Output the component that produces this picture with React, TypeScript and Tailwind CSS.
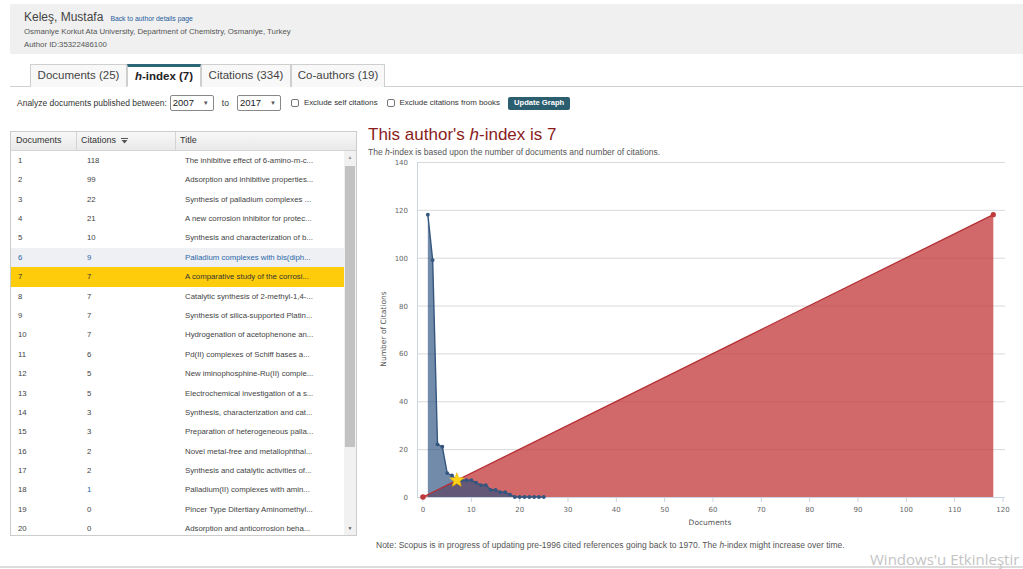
import React from 'react';

const ROWS: [number, number, string][] = [
  [1, 118, 'The inhibitive effect of 6-amino-m-c...'],
  [2, 99, 'Adsorption and inhibitive properties...'],
  [3, 22, 'Synthesis of palladium complexes ...'],
  [4, 21, 'A new corrosion inhibitor for protec...'],
  [5, 10, 'Synthesis and characterization of b...'],
  [6, 9, 'Palladium complexes with bis(diph...'],
  [7, 7, 'A comparative study of the corrosi...'],
  [8, 7, 'Catalytic synthesis of 2-methyl-1,4-...'],
  [9, 7, 'Synthesis of silica-supported Platin...'],
  [10, 7, 'Hydrogenation of acetophenone an...'],
  [11, 6, 'Pd(II) complexes of Schiff bases a...'],
  [12, 5, 'New iminophosphine-Ru(II) comple...'],
  [13, 5, 'Electrochemical investigation of a s...'],
  [14, 3, 'Synthesis, characterization and cat...'],
  [15, 3, 'Preparation of heterogeneous palla...'],
  [16, 2, 'Novel metal-free and metallophthal...'],
  [17, 2, 'Synthesis and catalytic activities of...'],
  [18, 1, 'Palladium(II) complexes with amin...'],
  [19, 0, 'Pincer Type Ditertiary Aminomethyl...'],
  [20, 0, 'Adsorption and anticorrosion beha...'],
];

const CITES = [118, 99, 22, 21, 10, 9, 7, 7, 7, 7, 6, 5, 5, 3, 3, 2, 2, 1, 0, 0, 0, 0, 0, 0, 0];

// chart geometry (svg coords)
const X = (d: number) => 55 + d * 4.833;
const Y = (c: number) => 340 - c * 2.393;

function Tab({ label, active, w }: { label: React.ReactNode; active?: boolean; w: string }) {
  return (
    <div
      className={`${w} h-[23px] -mb-px flex items-center justify-center text-[11.5px] border-x border-[#cfcfcf] ${
        active
          ? 'bg-white border-t-[3px] border-t-[#2c6576] border-b border-b-white font-bold text-[#222]'
          : 'bg-[#f8f8f8] border-t border-t-[#cfcfcf] text-[#444]'
      }`}
    >
      {label}
    </div>
  );
}

function Select({ value }: { value: string }) {
  return (
    <div className="w-[44px] h-[16px] border border-[#888] rounded-[2px] bg-white flex items-center justify-between pl-[2px] pr-[4px] text-[9.5px] text-[#222]">
      <span>{value}</span>
      <span className="text-[6px] text-[#555]">▼</span>
    </div>
  );
}

function Check({ label }: { label: string }) {
  return (
    <div className="flex items-center gap-[5px]">
      <div className="w-[8px] h-[8px] border border-[#777] rounded-[2px] bg-white" />
      <span>{label}</span>
    </div>
  );
}

function Chart() {
  const star = (cx: number, cy: number, ro: number, ri: number) => {
    const pts: string[] = [];
    for (let i = 0; i < 10; i++) {
      const r = i % 2 === 0 ? ro : ri;
      const a = -Math.PI / 2 + (i * Math.PI) / 5;
      pts.push(`${(cx + r * Math.cos(a)).toFixed(1)},${(cy + r * Math.sin(a)).toFixed(1)}`);
    }
    return pts.join(' ');
  };
  const bluePts = CITES.map((c, i) => `${X(i + 1)},${Y(c)}`).join(' ');
  const blueArea = `${X(1)},${Y(0)} ${bluePts} ${X(25)},${Y(0)}`;
  const ticksY = [0, 20, 40, 60, 80, 100, 120, 140];
  const ticksX = [0, 10, 20, 30, 40, 50, 60, 70, 80, 90, 100, 110, 120];
  return (
    <svg width="655" height="372" className="block" style={{ fontFamily: '"DejaVu Sans", sans-serif' }}>
      {ticksY.map((t) => (
        <g key={t}>
          {t > 0 && <line x1={49} x2={637} y1={Y(t) + 0.5} y2={Y(t) + 0.5} stroke="#d9d9d9" strokeWidth={1} />}
          <text x={40} y={Y(t) + 3} textAnchor="end" fontSize="7" fill="#666">
            {t}
          </text>
        </g>
      ))}
      <line x1={49.5} x2={49.5} y1={Y(140)} y2={Y(0)} stroke="#c9d5e2" />
      <line x1={49} x2={637} y1={Y(0) + 0.5} y2={Y(0) + 0.5} stroke="#c9d5e2" />
      {ticksX.map((t) => (
        <g key={t}>
          <line x1={X(t)} x2={X(t)} y1={Y(0)} y2={Y(0) + 5} stroke="#c9d5e2" />
          <text x={X(t)} y={355} textAnchor="middle" fontSize="7" fill="#666">
            {t}
          </text>
        </g>
      ))}
      <text x={342} y={368} textAnchor="middle" fontSize="7.5" fill="#555">
        Documents
      </text>
      <text
        x={18}
        y={172}
        textAnchor="middle"
        fontSize="7.5"
        fill="#555"
        transform="rotate(-90 18 172)"
      >
        Number of Citations
      </text>

      {/* red: documents = citations */}
      <polygon points={`${X(0)},${Y(0)} ${X(118)},${Y(118)} ${X(118)},${Y(0)}`} fill="#c23a3c" fillOpacity={0.76} />
      {/* blue: citations per document */}
      <polygon points={blueArea} fill="#2b4f7e" fillOpacity={0.66} />
      <line x1={X(0)} y1={Y(0)} x2={X(118)} y2={Y(118)} stroke="#b52f33" strokeWidth={1.3} />
      <polyline points={bluePts} fill="none" stroke="#34557e" strokeWidth={1.4} />
      {CITES.map((c, i) => (
        <circle key={i} cx={X(i + 1)} cy={Y(c)} r={1.9} fill="#34557e" />
      ))}
      <circle cx={X(0)} cy={Y(0)} r={2.8} fill="#c0393b" />
      <circle cx={X(118)} cy={Y(118)} r={2.6} fill="#c0393b" />
      <polygon points={star(X(7), Y(7), 7.5, 3.2)} fill="#fcd116" stroke="#f0b400" strokeWidth={0.6} />
    </svg>
  );
}

export default function App() {
  return (
    <div className="w-[1023px] h-[569px] bg-white relative overflow-hidden flex flex-col font-['Liberation_Sans',Arial,sans-serif] text-[#333]">
      {/* Author header */}
      <div className="mt-[4px] ml-[10px] h-[50px] bg-[#f0f0f0] pl-[14px] pt-[6px]">
        <div className="flex items-baseline gap-[7px] leading-[14px]">
          <span className="text-[12px] text-[#444]">Keleş, Mustafa</span>
          <span className="text-[6.8px] text-[#1d5d9c]">Back to author details page</span>
        </div>
        <div className="text-[7.8px] text-[#555] leading-[10px] mt-[1px]">
          Osmaniye Korkut Ata University, Department of Chemistry, Osmaniye, Turkey
        </div>
        <div className="text-[7.8px] text-[#555] leading-[10px] mt-[3px]">Author ID:35322486100</div>
      </div>

      {/* Tabs */}
      <div className="mt-[10px] ml-[10px] pl-[20px] flex border-b border-[#d0d0d0] h-[23px]">
        <Tab w="w-[97px]" label="Documents (25)" />
        <Tab
          w="w-[74px]"
          active
          label={
            <span>
              <i>h</i>-index (7)
            </span>
          }
        />
        <Tab w="w-[90px]" label="Citations (334)" />
        <Tab w="w-[94px]" label="Co-authors (19)" />
      </div>

      {/* Filters */}
      <div className="mt-[8px] h-[16px] pl-[17px] flex items-center text-[8.5px] text-[#333]">
        <span>Analyze documents published between:</span>
        <div className="ml-[3px]">
          <Select value="2007" />
        </div>
        <span className="ml-[8px]">to</span>
        <div className="ml-[8px]">
          <Select value="2017" />
        </div>
        <div className="ml-[10px] text-[7.9px]">
          <Check label="Exclude self citations" />
        </div>
        <div className="ml-[9px] text-[7.9px]">
          <Check label="Exclude citations from books" />
        </div>
        <div className="ml-[8px] h-[13px] px-[6px] bg-[#2b5e6f] rounded-[2px] text-white font-bold text-[7.6px] flex items-center">
          Update Graph
        </div>
      </div>

      {/* Main */}
      <div className="mt-[20px] flex">
        {/* Table */}
        <div className="ml-[10px] w-[347px] h-[405px] border border-[#cccccc] flex flex-col text-[7.8px]">
          <div className="h-[19px] flex bg-gradient-to-b from-[#f8f8f8] to-[#e9e9e9] border-b border-[#d4d4d4] text-[9px] text-[#333]">
            <div className="w-[66px] pl-[5px] flex items-center border-r border-[#d4d4d4]">Documents</div>
            <div className="w-[99px] pl-[4px] flex items-center gap-[5px] border-r border-[#d4d4d4]">
              Citations
              <svg width="7" height="6" viewBox="0 0 7 6">
                <rect x="0" y="0" width="7" height="1" fill="#555" />
                <polygon points="0.5,2 6.5,2 3.5,5.5" fill="#555" />
              </svg>
            </div>
            <div className="flex-1 pl-[4px] flex items-center">Title</div>
          </div>
          <div className="flex-1 flex overflow-hidden">
            <div className="flex-1 overflow-hidden">
              {ROWS.map(([d, c, t]) => {
                const hover = d === 6;
                const sel = d === 7;
                return (
                  <div
                    key={d}
                    className={`h-[19.4px] flex items-center ${
                      sel ? 'bg-[#fecc0a]' : hover ? 'bg-[#eef0f3] text-[#2a67a8]' : 'text-[#444]'
                    }`}
                  >
                    <div className="w-[67px] pl-[7px] shrink-0">{d}</div>
                    <div className={`w-[99px] pl-[9px] shrink-0 ${d === 18 ? 'text-[#2a67a8]' : ''}`}>{c}</div>
                    <div className="pl-[8px] whitespace-nowrap">{t}</div>
                  </div>
                );
              })}
            </div>
            <div className="w-[12px] bg-[#f1f1f1] flex flex-col items-center">
              <div className="h-[13px] flex items-center text-[5px] text-[#999]">▲</div>
              <div className="w-[10px] h-[281px] mt-[2px] bg-[#c2c2c2]" />
              <div className="flex-1" />
              <div className="h-[13px] flex items-center text-[5px] text-[#555]">▼</div>
            </div>
          </div>
        </div>

        {/* h-index chart */}
        <div className="ml-[11px] -mt-[6px] flex flex-col">
          <div className="text-[17px] leading-[20px] text-[#8a1c1c]">
            This author's <i>h</i>-index is 7
          </div>
          <div className="text-[8.5px] leading-[10px] text-[#555] mt-[2px]">
            The <i>h</i>-index is based upon the number of documents and number of citations.
          </div>
          <Chart />
          <div className="ml-[8px] mt-[11px] text-[8.5px] leading-[10px] text-[#555]">
            Note: Scopus is in progress of updating pre-1996 cited references going back to 1970. The <i>h</i>-index might
            increase over time.
          </div>
        </div>
      </div>

      <div className="flex-1" />
      <div className="h-[2px] bg-[#dcdcdc] mb-[1px]" />

      {/* OS activation watermark */}
      <div className="absolute left-[870px] top-[548px] text-[15px] text-[#c4c4c4] whitespace-nowrap font-['Open_Sans',sans-serif]">
        Windows'u Etkinleştir
      </div>
    </div>
  );
}
